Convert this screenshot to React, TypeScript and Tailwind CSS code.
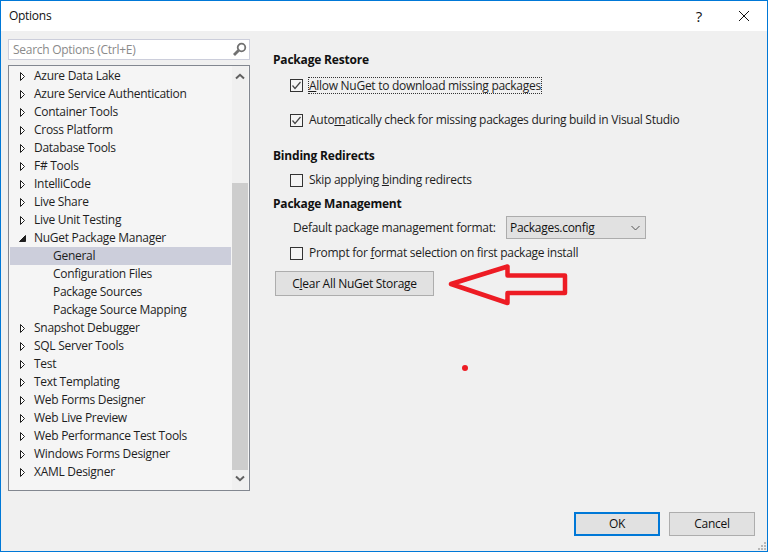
const F = "font-['Open_Sans','Noto_Sans',sans-serif]";

const tree: { label: string; kind: "closed" | "open" | "child" | "selected" }[] = [
  { label: "Azure Data Lake", kind: "closed" },
  { label: "Azure Service Authentication", kind: "closed" },
  { label: "Container Tools", kind: "closed" },
  { label: "Cross Platform", kind: "closed" },
  { label: "Database Tools", kind: "closed" },
  { label: "F# Tools", kind: "closed" },
  { label: "IntelliCode", kind: "closed" },
  { label: "Live Share", kind: "closed" },
  { label: "Live Unit Testing", kind: "closed" },
  { label: "NuGet Package Manager", kind: "open" },
  { label: "General", kind: "selected" },
  { label: "Configuration Files", kind: "child" },
  { label: "Package Sources", kind: "child" },
  { label: "Package Source Mapping", kind: "child" },
  { label: "Snapshot Debugger", kind: "closed" },
  { label: "SQL Server Tools", kind: "closed" },
  { label: "Test", kind: "closed" },
  { label: "Text Templating", kind: "closed" },
  { label: "Web Forms Designer", kind: "closed" },
  { label: "Web Live Preview", kind: "closed" },
  { label: "Web Performance Test Tools", kind: "closed" },
  { label: "Windows Forms Designer", kind: "closed" },
  { label: "XAML Designer", kind: "closed" },
];

function Arrow({ open }: { open: boolean }) {
  return (
    <svg width="7" height="9" viewBox="0 0 7 9" className="shrink-0">
      {open ? (
        <path d="M0.5 7.5H6.5V1.5Z" fill="#1e1e1e" stroke="#1e1e1e" />
      ) : (
        <path d="M1.5 0.5V8.5L5.5 4.5Z" fill="#fff" stroke="#1e1e1e" />
      )}
    </svg>
  );
}

function Row({ label, kind }: { label: string; kind: string }) {
  const isChild = kind === "child" || kind === "selected";
  return (
    <div className={`flex h-[18px] items-center ${kind === "selected" ? "bg-[#cccedb]" : ""}`}>
      {isChild ? (
        <span className="ml-[43px] whitespace-nowrap">{label}</span>
      ) : (
        <>
          <span className="ml-[9px] flex w-[15px]">
            <Arrow open={kind === "open"} />
          </span>
          <span className="whitespace-nowrap">{label}</span>
        </>
      )}
    </div>
  );
}

function Check({ checked }: { checked?: boolean }) {
  return (
    <span className="flex h-[13px] w-[13px] shrink-0 items-center justify-center border border-[#333] bg-[#f4f4f4]">
      {checked && (
        <svg width="11" height="11" viewBox="0 0 11 11">
          <path d="M1.5 5.5L4 8.5L9.5 2" fill="none" stroke="#444" strokeWidth="1.2" />
        </svg>
      )}
    </span>
  );
}

function Heading({ children, className = "" }: { children: string; className?: string }) {
  return <div className={`h-[18px] leading-[18px] font-bold tracking-[-0.2px] text-[#111] ${className}`}>{children}</div>;
}

function CheckRow({ checked, children, className = "" }: { checked?: boolean; children: React.ReactNode; className?: string }) {
  return (
    <div className={`ml-[17px] flex h-[18px] items-center gap-[6px] ${className}`}>
      <Check checked={checked} />
      {children}
    </div>
  );
}

export default function App() {
  return (
    <div className={`${F} relative flex h-[552px] w-[768px] flex-col overflow-hidden border border-[#0078d7] bg-[#f0f0f0] text-[12px] tracking-[-0.28px] text-[#1e1e1e]`}>
      <header className="flex h-[30px] shrink-0 items-center bg-white pl-[8px] text-[#111]">
        <span className="flex-1">Options</span>
        <span className="mr-[36px] text-[15px] leading-none">?</span>
        <svg width="12" height="12" viewBox="0 0 12 12" className="mr-[17px]">
          <path d="M1 1L11 11M11 1L1 11" stroke="#111" strokeWidth="1" />
        </svg>
      </header>

      <div className="flex min-h-0 flex-1">
        <aside className="ml-[7px] flex w-[242px] shrink-0 flex-col pt-[8px]">
          <div className="flex h-[21px] w-full items-center border border-[#cccedb] bg-white pl-[4px] pr-[2px] text-[#8a8a8a]">
            <span className="flex-1">Search Options (Ctrl+E)</span>
            <svg width="15" height="15" viewBox="0 0 15 15">
              <circle cx="9.5" cy="5.5" r="3.8" fill="none" stroke="#717171" strokeWidth="1.8" />
              <path d="M6.5 8.5L2 13" stroke="#717171" strokeWidth="2.8" />
            </svg>
          </div>
          <div className="mt-[5px] flex h-[426px] border border-[#828790] bg-[#f5f5f5] pl-[1px] pr-[1px]">
            <div className="w-[221px] pt-[1px]">
              {tree.map((t) => (
                <Row key={t.label} label={t.label} kind={t.kind} />
              ))}
            </div>
            <div className="ml-[1px] flex w-[16px] flex-col items-center bg-[#f0f0f0]">
              <svg width="10" height="7" viewBox="0 0 10 7" className="mt-[7px] shrink-0">
                <path d="M1 5.5L5 1.8L9 5.5" fill="none" stroke="#606060" strokeWidth="2" />
              </svg>
              <div className="mt-[103px] h-[287px] w-full shrink-0 bg-[#cdcdcd]" />
              <svg width="10" height="7" viewBox="0 0 10 7" className="mt-[5px] shrink-0">
                <path d="M1 1.5L5 5.2L9 1.5" fill="none" stroke="#606060" strokeWidth="2" />
              </svg>
            </div>
          </div>
        </aside>

        <main className="ml-[23px] flex-1 pt-[20px]">
          <Heading>Package Restore</Heading>
          <CheckRow checked className="mt-[7px]">
            <span className="-ml-[1px] border border-dotted border-[#333] leading-[15px] whitespace-nowrap">
              <u>A</u>llow NuGet to download missing packages
            </span>
          </CheckRow>
          <CheckRow checked className="mt-[17px]">
            <span className="whitespace-nowrap">
              Auto<u>m</u>atically check for missing packages during build in Visual Studio
            </span>
          </CheckRow>
          <Heading className="mt-[18px]">Binding Redirects</Heading>
          <CheckRow className="mt-[6px]">
            <span>
              Skip applying <u>b</u>inding redirects
            </span>
          </CheckRow>
          <Heading className="mt-[6px]">Package Management</Heading>
          <div className="ml-[20px] mt-[3px] flex h-[23px] items-center">
            <span className="w-[213px]">Default package management format:</span>
            <div className="flex h-[23px] w-[140px] items-center justify-between border border-[#acacac] bg-[#e1e1e1] pl-[3px] pr-[5px] text-[#111]">
              <span>Packages.config</span>
              <svg width="9" height="6" viewBox="0 0 9 6">
                <path d="M0.5 1L4.5 5L8.5 1" fill="none" stroke="#555" />
              </svg>
            </div>
          </div>
          <CheckRow className="mt-[5px]">
            <span>
              Prompt for <u>f</u>ormat selection on first package install
            </span>
          </CheckRow>
          <button className="ml-[2px] mt-[9px] block h-[25px] w-[159px] border border-[#adadad] bg-[#e1e1e1] text-center text-[#111]">
            C<u>l</u>ear All NuGet Storage
          </button>
        </main>
      </div>

      <footer className="flex h-[39px] shrink-0 justify-end gap-[9px] pr-[12px]">
        <button className="h-[24px] w-[86px] border-2 border-[#0078d7] bg-[#e1e1e1] text-[#111]">OK</button>
        <button className="h-[24px] w-[86px] border border-[#adadad] bg-[#e1e1e1] text-[#111]">Cancel</button>
      </footer>

      <svg width="10" height="10" viewBox="0 0 10 10" className="absolute bottom-0 right-0">
        <path d="M7 1h2v2H7zM4 4h2v2H4zM7 4h2v2H7zM1 7h2v2H1zM4 7h2v2H4zM7 7h2v2H7z" fill="#b8b8b8" />
      </svg>

      <svg width="130" height="50" viewBox="0 0 130 50" className="absolute left-[447px] top-[263px]">
        <path d="M3 20L59.5 2.5V11.5H117V29H59.5V39Z" fill="none" stroke="#ed1c24" strokeWidth="4.5" strokeLinejoin="round" />
      </svg>
      <span className="absolute left-[461px] top-[364px] h-[6px] w-[6px] rounded-full bg-[#ed1c24]" />
    </div>
  );
}
